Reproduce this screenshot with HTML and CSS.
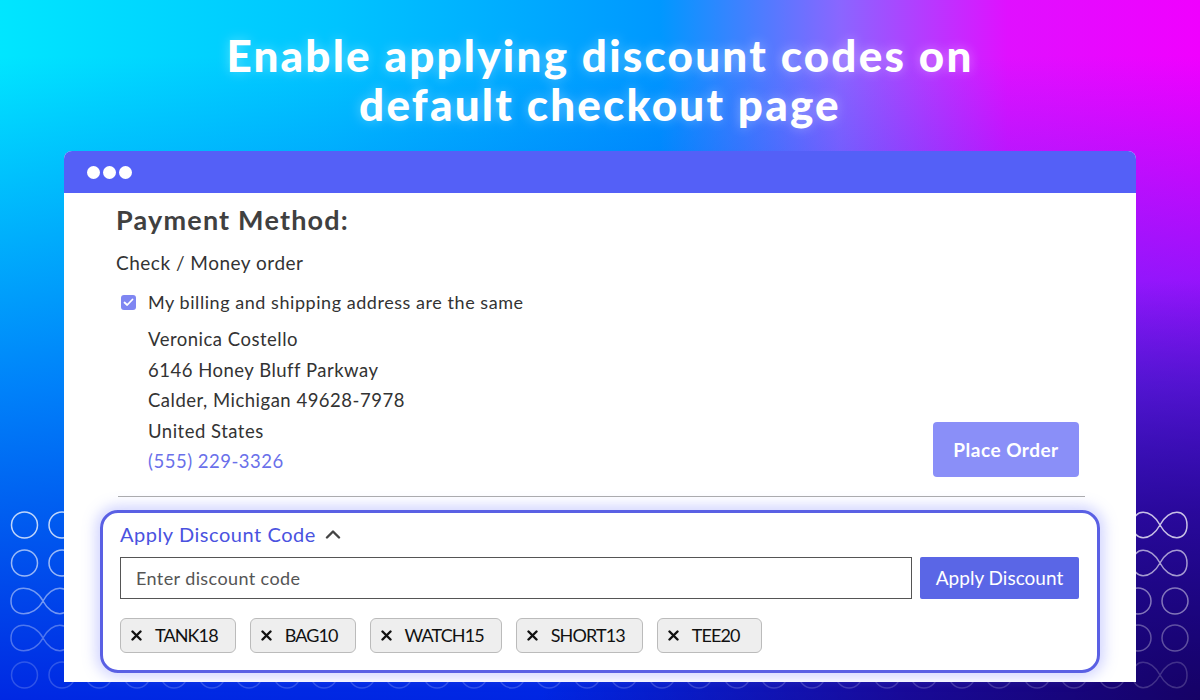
FILE: index.html
```html
<!DOCTYPE html>
<html lang="en">
<head>
<meta charset="utf-8">
<title>Discount codes on checkout</title>
<link rel="stylesheet" href="styles.css">
</head>
<body>
<div class="stage">
  <svg class="pattern" width="1200" height="200" viewBox="0 0 1200 200" aria-hidden="true">
    <g fill="none" stroke="#ffffff" stroke-width="1.5">
      <g opacity="0.75">
        <circle cx="24.5" cy="15" r="13"/><circle cx="62" cy="15" r="13"/>
        <path d="M1160 15 C1169 -2 1187 -2 1187 15 C1187 32 1169 32 1160 15 C1151 -2 1133 -2 1133 15 C1133 32 1151 32 1160 15 Z"/>
      </g>
      <g opacity="0.6">
        <circle cx="24.5" cy="53" r="13"/><circle cx="62" cy="53" r="13"/>
        <path d="M1160 53 C1169 36 1187 36 1187 53 C1187 70 1169 70 1160 53 C1151 36 1133 36 1133 53 C1133 70 1151 70 1160 53 Z"/>
      </g>
      <g opacity="0.45">
        <path d="M43 91 C52 74 70 74 70 91 C70 108 52 108 43 91 C34 74 11 74 11 91 C11 108 34 108 43 91 Z"/>
        <circle cx="1138" cy="91" r="13"/><circle cx="1175" cy="91" r="13"/>
      </g>
      <g opacity="0.3">
        <path d="M43 128 C52 111 70 111 70 128 C70 145 52 145 43 128 C34 111 11 111 11 128 C11 145 34 145 43 128 Z"/>
        <circle cx="1138" cy="128" r="13"/><circle cx="1175" cy="128" r="13"/>
      </g>
      <g opacity="0.18">
        <circle cx="24.5" cy="165" r="13"/><circle cx="62" cy="165" r="13"/>
        <circle cx="99" cy="165" r="13"/><circle cx="137" cy="165" r="13"/><circle cx="174" cy="165" r="13"/>
        <circle cx="212" cy="165" r="13"/><circle cx="249" cy="165" r="13"/><circle cx="287" cy="165" r="13"/>
        <circle cx="324" cy="165" r="13"/><circle cx="362" cy="165" r="13"/><circle cx="399" cy="165" r="13"/>
        <circle cx="437" cy="165" r="13"/><circle cx="474" cy="165" r="13"/><circle cx="512" cy="165" r="13"/>
        <circle cx="549" cy="165" r="13"/><circle cx="587" cy="165" r="13"/><circle cx="624" cy="165" r="13"/>
        <circle cx="662" cy="165" r="13"/><circle cx="699" cy="165" r="13"/><circle cx="737" cy="165" r="13"/>
        <circle cx="774" cy="165" r="13"/><circle cx="812" cy="165" r="13"/><circle cx="849" cy="165" r="13"/>
        <circle cx="887" cy="165" r="13"/><circle cx="924" cy="165" r="13"/><circle cx="962" cy="165" r="13"/>
        <circle cx="999" cy="165" r="13"/><circle cx="1037" cy="165" r="13"/><circle cx="1074" cy="165" r="13"/>
        <circle cx="1112" cy="165" r="13"/>
        <path d="M1160 165 C1169 148 1187 148 1187 165 C1187 182 1169 182 1160 165 C1151 148 1133 148 1133 165 C1133 182 1151 182 1160 165 Z"/>
      </g>
    </g>
  </svg>

  <h1 class="headline">Enable applying discount codes on<br>default checkout page</h1>

  <div class="window">
    <div class="window-bar">
      <span class="dot"></span><span class="dot"></span><span class="dot"></span>
    </div>
    <div class="window-body">
      <h2 class="section-title">Payment Method:</h2>
      <p class="method">Check / Money order</p>
      <label class="same-address">
        <span class="checkbox">
          <svg width="11" height="9" viewBox="0 0 11 9"><path d="M1.5 4.5 L4.2 7 L9.5 1.5" fill="none" stroke="#fff" stroke-width="1.8" stroke-linecap="round" stroke-linejoin="round"/></svg>
        </span>
        <span>My billing and shipping address are the same</span>
      </label>
      <div class="address-row">
        <address class="address">
          <span>Veronica Costello</span>
          <span>6146 Honey Bluff Parkway</span>
          <span>Calder, Michigan 49628-7978</span>
          <span>United States</span>
          <a class="phone">(555) 229-3326</a>
        </address>
        <button class="place-order">Place Order</button>
      </div>
      <hr class="divider">
      <section class="discount">
        <div class="discount-head">
          <span>Apply Discount Code</span>
          <svg class="caret" width="16" height="10" viewBox="0 0 16 10"><path d="M2 8.5 L8 2.5 L14 8.5" fill="none" stroke="#444" stroke-width="2.4" stroke-linecap="round" stroke-linejoin="round"/></svg>
        </div>
        <div class="discount-form">
          <div class="code-input">Enter discount code</div>
          <button class="apply-btn">Apply Discount</button>
        </div>
        <div class="tags">
          <span class="tag"><svg class="x" width="11" height="11" viewBox="0 0 11 11"><path d="M1.5 1.5 L9.5 9.5 M9.5 1.5 L1.5 9.5" stroke="#111" stroke-width="2.4" stroke-linecap="round"/></svg>TANK18</span>
          <span class="tag"><svg class="x" width="11" height="11" viewBox="0 0 11 11"><path d="M1.5 1.5 L9.5 9.5 M9.5 1.5 L1.5 9.5" stroke="#111" stroke-width="2.4" stroke-linecap="round"/></svg>BAG10</span>
          <span class="tag"><svg class="x" width="11" height="11" viewBox="0 0 11 11"><path d="M1.5 1.5 L9.5 9.5 M9.5 1.5 L1.5 9.5" stroke="#111" stroke-width="2.4" stroke-linecap="round"/></svg>WATCH15</span>
          <span class="tag"><svg class="x" width="11" height="11" viewBox="0 0 11 11"><path d="M1.5 1.5 L9.5 9.5 M9.5 1.5 L1.5 9.5" stroke="#111" stroke-width="2.4" stroke-linecap="round"/></svg>SHORT13</span>
          <span class="tag tag-wide"><svg class="x" width="11" height="11" viewBox="0 0 11 11"><path d="M1.5 1.5 L9.5 9.5 M9.5 1.5 L1.5 9.5" stroke="#111" stroke-width="2.4" stroke-linecap="round"/></svg>TEE20</span>
        </div>
      </section>
    </div>
  </div>
</div>
</body>
</html>
```

FILE: styles.css
```css
* { box-sizing: border-box; }

html, body {
  margin: 0;
  padding: 0;
  width: 1200px;
  height: 700px;
  overflow: hidden;
}

body {
  font-family: "Lato", "Liberation Sans", sans-serif;
}

.stage {
  position: relative;
  width: 1200px;
  height: 700px;
  overflow: hidden;
  background:
    radial-gradient(ellipse 55% 60% at 100% 100%, rgba(22, 0, 95, 0.95) 0%, rgba(30, 0, 120, 0.7) 45%, rgba(40, 0, 160, 0) 100%),
    linear-gradient(to bottom, rgba(0, 60, 255, 0) 8%, rgba(0, 50, 245, 0.55) 55%, rgba(0, 30, 225, 0.95) 100%),
    linear-gradient(to right, #00e6ff 0%, #00c4ff 28%, #0098ff 55%, #8a66ff 70%, #e010ff 84%, #f000ff 100%);
}

.pattern {
  position: absolute;
  left: 0;
  top: 510px;
}

.headline {
  position: relative;
  margin: 0;
  padding-top: 31px;
  text-align: center;
  color: #fff;
  font-family: "Lato", sans-serif;
  font-weight: 900;
  font-size: 44px;
  line-height: 49px;
  letter-spacing: 2.2px;
  text-shadow: 0 0 12px rgba(255, 255, 255, 0.35);
}

.window {
  position: relative;
  margin: 22px 64px 0;
  width: 1072px;
  height: 531px;
  background: #fff;
  border-radius: 8px 8px 0 0;
}

.window-bar {
  height: 42px;
  background: #5460f7;
  border-radius: 8px 8px 0 0;
  display: flex;
  align-items: center;
  gap: 3px;
  padding-left: 23px;
}

.dot {
  width: 13px;
  height: 13px;
  border-radius: 50%;
  background: #fff;
}

.window-body {
  padding-top: 10px;
  color: #333;
}

.section-title {
  margin: 0 0 0 52px;
  font-size: 27px;
  line-height: 34px;
  font-weight: 700;
  letter-spacing: 1.2px;
  color: #404040;
}

.method {
  margin: 11px 0 0 52px;
  font-size: 19px;
  line-height: 30px;
  letter-spacing: 0.5px;
}

.same-address {
  margin: 9px 0 0 57px;
  display: flex;
  align-items: center;
  gap: 12px;
  font-size: 18px;
  line-height: 30px;
  letter-spacing: 0.55px;
}

.checkbox {
  width: 15px;
  height: 15px;
  border-radius: 3px;
  background: #7f86f2;
  display: flex;
  align-items: center;
  justify-content: center;
}

.address-row {
  margin: 7px 57px 0 84px;
  display: flex;
  justify-content: space-between;
  align-items: flex-end;
}

.address {
  font-style: normal;
  display: flex;
  flex-direction: column;
  font-size: 18.5px;
  line-height: 30.5px;
  letter-spacing: 0.5px;
}

.phone { color: #6a70ea; }

.place-order {
  width: 146px;
  height: 55px;
  border: none;
  border-radius: 4px;
  background: #8a8ff8;
  color: #fff;
  font-family: inherit;
  font-weight: 700;
  font-size: 19px;
  letter-spacing: 0.5px;
}

.divider {
  margin: 19px 51px 0 54px;
  border: none;
  border-top: 1.5px solid #adadad;
}

.discount {
  margin: 13px 36px 0;
  border: 3px solid #5a60e4;
  border-radius: 18px;
  padding: 8px 18px 17px 17px;
  box-shadow: 0 0 14px 4px rgba(120, 130, 255, 0.35);
}

.discount-head {
  display: flex;
  align-items: center;
  gap: 9px;
  color: #4a52e0;
  font-size: 20px;
  line-height: 26px;
  letter-spacing: 0.55px;
}

.discount-form {
  margin-top: 10px;
  display: flex;
  gap: 8px;
}

.code-input {
  flex: 1;
  height: 42px;
  border: 1px solid #555;
  padding-left: 15px;
  display: flex;
  align-items: center;
  font-size: 18px;
  letter-spacing: 0.4px;
  color: #555;
}

.apply-btn {
  width: 159px;
  height: 42px;
  border: none;
  border-radius: 2px;
  background: #5a66e6;
  color: #fff;
  font-family: inherit;
  font-size: 19px;
}

.tags {
  margin-top: 19px;
  display: flex;
  gap: 14px;
}

.tag {
  height: 35px;
  display: flex;
  align-items: center;
  gap: 13px;
  padding: 0 17px 0 10px;
  background: #eee;
  border: 1px solid #bbb;
  border-radius: 6px;
  font-size: 18px;
  letter-spacing: -0.9px;
  color: #111;
}

.tag-wide {
  padding-right: 21px;
}
```
